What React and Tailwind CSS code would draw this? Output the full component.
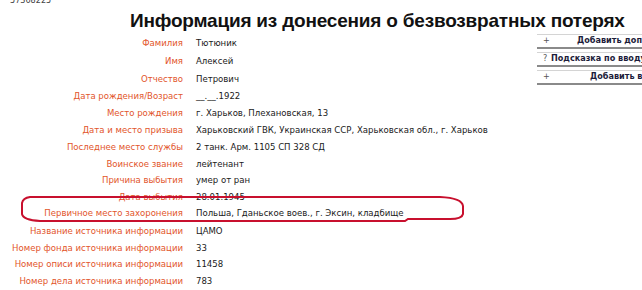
import React from "react"

const rows = [
  { label: "Фамилия", value: "Тютюник", h: "h-[18px]" },
  { label: "Имя", value: "Алексей", h: "h-[19px]" },
  { label: "Отчество", value: "Петрович", h: "h-[17px]" },
  { label: "Дата рождения/Возраст", value: "__.__.1922", h: "h-[17px]" },
  { label: "Место рождения", value: "г. Харьков, Плехановская, 13", h: "h-[17px]" },
  { label: "Дата и место призыва", value: "Харьковский ГВК, Украинская ССР, Харьковская обл., г. Харьков", h: "h-[17px]" },
  { label: "Последнее место службы", value: "2 танк. Арм. 1105 СП 328 СД", h: "h-[17px]" },
  { label: "Воинское звание", value: "лейтенант", h: "h-[16px]" },
  { label: "Причина выбытия", value: "умер от ран", h: "h-[17px]" },
  { label: "Дата выбытия", value: "28.01.1945", h: "h-[16px]" },
  { label: "Первичное место захоронения", value: "Польша, Гданьское воев., г. Эксин, кладбище", h: "h-[17px]" },
  { label: "Название источника информации", value: "ЦАМО", h: "h-[18px]" },
  { label: "Номер фонда источника информации", value: "33", h: "h-[16px]" },
  { label: "Номер описи источника информации", value: "11458", h: "h-[17px]" },
  { label: "Номер дела источника информации", value: "783", h: "h-[17px]" },
]

const SideButton = ({ icon, text, pad }) => (
  <div className="flex items-center h-[15px] border-t border-[#d4d4d4] border-b-2 border-b-[#8a8a8a] overflow-hidden whitespace-nowrap text-[9px] font-bold text-[#1c1c3a]">
    <span className="w-[12px] pl-[6px] text-[#555] font-normal shrink-0">{icon}</span>
    <span className={pad}>{text}</span>
  </div>
)

export default function App() {
  return (
    <div
      className="relative w-[642px] h-[290px] bg-white overflow-hidden"
      style={{ fontFamily: '"DejaVu Sans Condensed", "DejaVu Sans", sans-serif' }}
    >
      <div className="h-[8px] leading-[8px] pl-[10px] text-[9px] text-[#444] -mt-[4px] mb-[4px]">57368225</div>
      <h1
        className="h-[26px] leading-[26px] pl-[130px] text-[19px] font-bold text-[#111] whitespace-nowrap tracking-[-0.2px]"
        style={{ fontFamily: '"Liberation Sans", Arial, sans-serif' }}
      >
        Информация из донесения о безвозвратных потерях
      </h1>

      <div className="flex">
        <div className="flex flex-col">
          {rows.map(r => (
            <div key={r.label} className={`flex items-center ${r.h} text-[9.5px] whitespace-nowrap`}>
              <div className="w-[183px] text-right text-[#e2552b]">{r.label}</div>
              <div className="pl-[13px] text-[#1a1a1a]">{r.value}</div>
            </div>
          ))}
        </div>

        <div className="ml-auto w-[105px] flex flex-col gap-[3px]">
          <SideButton icon="+" text="Добавить дополнительную информацию" pad="pl-[28px]" />
          <SideButton icon="?" text="Подсказка по вводу данных" pad="pl-[2px]" />
          <SideButton icon="+" text="Добавить в список" pad="pl-[41px]" />
        </div>
      </div>

      <svg className="absolute left-0 top-0 pointer-events-none" width="642" height="290">
        <path
          d="M30 197 L440 197 Q462 198 463 206 L463 214 Q462 219 450 219 L408 219 L405 221 L40 221 Q23 220 22 214 L22 203 Q23 198 30 197 Z"
          fill="none"
          stroke="#c8102e"
          strokeWidth="2"
        />
      </svg>
    </div>
  )
}
